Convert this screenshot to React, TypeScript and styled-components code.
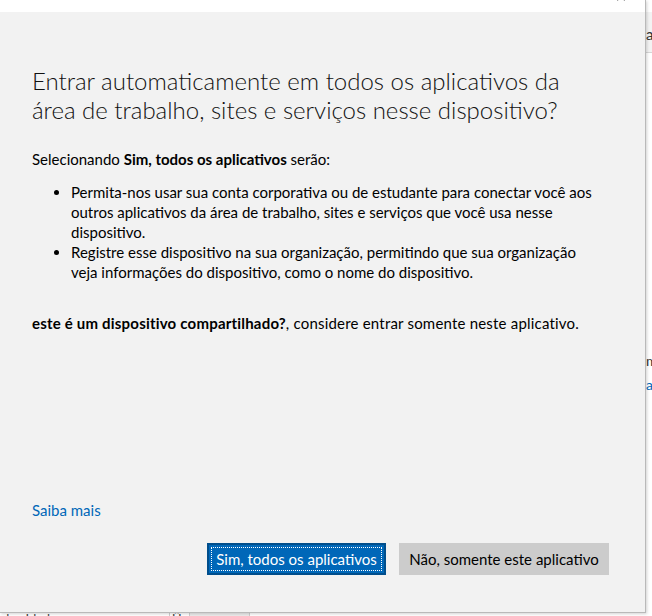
import React from 'react';
import styled, { createGlobalStyle } from 'styled-components';

const GlobalStyle = createGlobalStyle`
    html, body {
        margin: 0;
        padding: 0;
        width: 652px;
        height: 616px;
        overflow: hidden;
        background: #ffffff;
    }
    * {
        box-sizing: border-box;
    }
`;

const Desktop = styled.div`
    position: relative;
    width: 652px;
    height: 616px;
    font-family: Lato, "Liberation Sans", sans-serif;
    background: #ffffff;
`;

const BackWindow = styled.div`
    position: absolute;
    inset: 0;
    display: flex;
    flex-direction: column;
`;

const BackTop = styled.div`
    height: 12px;
    background: #ffffff;
`;

const BackToolbar = styled.div`
    height: 41px;
    background: #f3f3f3;
    border-bottom: 1px solid #d6d6d6;
    display: flex;
    justify-content: flex-end;
    align-items: flex-end;
    padding: 0 0 6px 0;
    font-size: 15px;
    color: #222;
`;

const BackBody = styled.div`
    flex: 1;
    display: flex;
    flex-direction: column;
    align-items: flex-end;
    padding-top: 296px;
    font-size: 14px;
`;

const BackText = styled.span<{ $blue?: boolean }>`
    display: block;
    width: 6px;
    overflow: hidden;
    line-height: 24px;
    color: ${(p) => (p.$blue ? '#0067b8' : '#333')};
`;

const BackBottom = styled.div`
    height: 3px;
    display: flex;
    overflow: hidden;
    font-size: 13px;
    line-height: 13px;
    color: #444;
    align-items: flex-start;
`;

const BackCell = styled.div<{ $w: number; $bg?: string }>`
    width: ${(p) => p.$w}px;
    background: ${(p) => p.$bg || 'transparent'};
    border-right: 1px solid #cfcfcf;
    padding-left: 2px;
    height: 100%;
`;

const Dialog = styled.div`
    position: absolute;
    left: 0;
    top: 0;
    width: 646px;
    height: 613px;
    display: flex;
    flex-direction: column;
    border-right: 1px solid #b9b9b9;
    border-bottom: 1px solid #b9b9b9;
    box-shadow: 1px 1px 3px rgba(0, 0, 0, 0.18);
    background: #f2f2f2;
`;

const TitleBar = styled.div`
    height: 12px;
    background: #ffffff;
    position: relative;
`;

const CloseHint = styled.svg`
    position: absolute;
    right: 18px;
    top: -2px;
`;

const Body = styled.div`
    flex: 1;
    display: flex;
    flex-direction: column;
    padding: 54px 36px 37px 32px;
    color: #000;
`;

const Title = styled.h1`
    margin: 0;
    font-family: Lato, "Liberation Sans", sans-serif;
    font-weight: 300;
    font-size: 24px;
    line-height: 29px;
    color: #111;
    white-space: nowrap;
`;

const Paragraph = styled.p`
    margin: 25px 0 0 0;
    font-size: 15px;
    line-height: 20px;
    white-space: nowrap;
`;

const BulletList = styled.ul`
    margin: 13px 0 0 0;
    padding: 0 0 0 39px;
    font-size: 15px;
    line-height: 20px;
    white-space: nowrap;
`;

const Bullet = styled.li`
    padding-left: 0;
`;

const Note = styled.p`
    margin: 31px 0 0 0;
    font-size: 15px;
    line-height: 20px;
    white-space: nowrap;
    letter-spacing: 0.2px;
`;

const Spacer = styled.div`
    flex: 1;
`;

const LearnMore = styled.a`
    font-size: 15px;
    line-height: 20px;
    color: #0067b8;
    text-decoration: none;
    align-self: flex-start;
`;

const Footer = styled.div`
    display: flex;
    justify-content: flex-end;
    gap: 13px;
    margin-top: 23px;
`;

const Button = styled.button<{ $primary?: boolean; $w: number }>`
    position: relative;
    width: ${(p) => p.$w}px;
    height: 32px;
    padding: 0;
    font-family: Lato, "Liberation Sans", sans-serif;
    font-size: 15px;
    color: ${(p) => (p.$primary ? '#ffffff' : '#000000')};
    background: ${(p) => (p.$primary ? '#0067b8' : '#cccccc')};
    border: 2px solid ${(p) => (p.$primary ? '#004e8c' : '#cccccc')};
    cursor: pointer;
    ${(p) =>
        p.$primary &&
        `
        &::after {
            content: '';
            position: absolute;
            inset: 2px;
            border: 1px dotted #ffffff;
        }
    `}
`;

export default function App() {
    return (
        <>
            <GlobalStyle />
            <Desktop>
                <BackWindow>
                    <BackTop />
                    <BackToolbar>
                        <BackText>a</BackText>
                    </BackToolbar>
                    <BackBody>
                        <BackText>m</BackText>
                        <BackText $blue>a</BackText>
                    </BackBody>
                    <BackBottom>
                        <BackCell $w={170}>dos Idade</BackCell>
                        <BackCell $w={20}>Ü</BackCell>
                        <BackCell $w={60} $bg="#ececec" />
                    </BackBottom>
                </BackWindow>
                <Dialog>
                    <TitleBar>
                        <CloseHint width="12" height="8" viewBox="0 0 12 8">
                            <path d="M1 0 L3 3 M11 0 L9 3" stroke="#9a9a9a" strokeWidth="1" fill="none" />
                        </CloseHint>
                    </TitleBar>
                    <Body>
                        <Title>
                            Entrar automaticamente em todos os aplicativos da
                            <br />
                            área de trabalho, sites e serviços nesse dispositivo?
                        </Title>
                        <Paragraph>
                            Selecionando <strong>Sim, todos os aplicativos</strong> serão:
                        </Paragraph>
                        <BulletList>
                            <Bullet>
                                Permita-nos usar sua conta corporativa ou de estudante para conectar você aos
                                <br />
                                outros aplicativos da área de trabalho, sites e serviços que você usa nesse
                                <br />
                                dispositivo.
                            </Bullet>
                            <Bullet>
                                Registre esse dispositivo na sua organização, permitindo que sua organização
                                <br />
                                veja informações do dispositivo, como o nome do dispositivo.
                            </Bullet>
                        </BulletList>
                        <Note>
                            <strong>este é um dispositivo compartilhado?</strong>, considere entrar somente neste aplicativo.
                        </Note>
                        <Spacer />
                        <LearnMore href="#">Saiba mais</LearnMore>
                        <Footer>
                            <Button $primary $w={179}>Sim, todos os aplicativos</Button>
                            <Button $w={210}>Não, somente este aplicativo</Button>
                        </Footer>
                    </Body>
                </Dialog>
            </Desktop>
        </>
    );
}
